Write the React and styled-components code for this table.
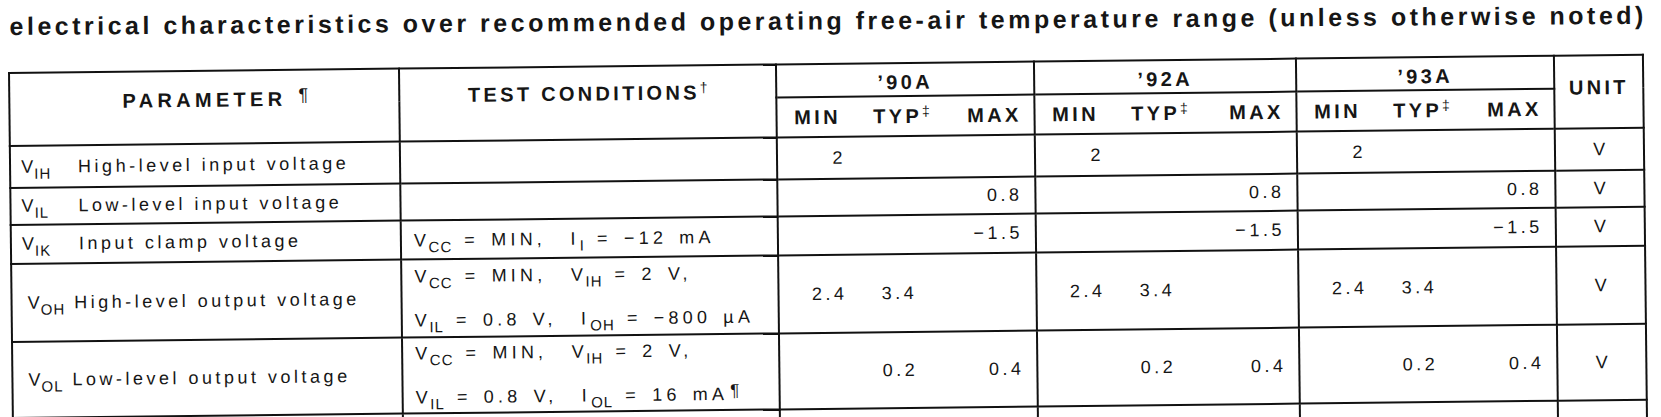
import React from "react";
import styled, { createGlobalStyle } from "styled-components";

const GlobalStyle = createGlobalStyle`
  html, body {
    margin: 0;
    padding: 0;
    background: #ffffff;
  }
  body {
    font-family: "Liberation Sans", Arial, sans-serif;
    color: #161616;
  }
`;

const Sheet = styled.div`
  width: 1661px;
  height: 417px;
  overflow: hidden;
`;

const Page = styled.div`
  padding: 13px 0 0 8px;
  transform: rotate(-0.64deg);
  transform-origin: 8px 72px;
`;

const Title = styled.h1`
  margin: 0 0 33px 2px;
  font-size: 25px;
  line-height: 26px;
  font-weight: 700;
  letter-spacing: 3.5px;
  white-space: nowrap;
  transform: rotate(0.25deg);
  transform-origin: left center;
`;

const Table = styled.table`
  border-collapse: collapse;
  table-layout: fixed;
  width: 1634px;
  border: 2px solid #111;
`;

const Row = styled.tr`
  height: ${({ $h }) => $h}px;
`;

const Head = styled.th`
  border: 2px solid #111;
  padding: ${({ $drop }) => $drop || 0}px 0 ${({ $lift }) => $lift || 0}px;
  font-size: 20px;
  font-weight: 700;
  letter-spacing: ${({ $ls }) => $ls || 3.3}px;
  text-align: center;
  vertical-align: middle;
  white-space: nowrap;
`;

const Cell = styled.td`
  border: 2px solid #111;
  padding: 0;
  font-size: 18px;
  letter-spacing: 3.5px;
  vertical-align: middle;
  white-space: nowrap;
`;

const ParamCell = styled(Cell)`
  padding-left: ${({ $pad }) => $pad}px;
`;

const CondCell = styled(Cell)`
  padding-left: 12px;
  letter-spacing: 4.2px;
  word-spacing: 3px;
`;

const UnitCell = styled(Cell)`
  text-align: center;
  padding-left: 3px;
`;

const CondLine = styled.div`
  line-height: 30px;
  white-space: pre;
  & + & {
    margin-top: 14px;
  }
`;

const Sym = styled.span`
  display: inline-block;
  width: ${({ $w }) => ($w ? `${$w}px` : "auto")};
  margin-right: ${({ $gap }) => $gap || 0}px;
  letter-spacing: ${({ $ls }) => $ls}px;
`;

const Sub = styled.span`
  font-size: 15px;
  vertical-align: -6px;
  line-height: 0;
  letter-spacing: 1px;
`;

const Mark = styled.span`
  font-size: ${({ $size }) => $size || 14}px;
  font-weight: 400;
  vertical-align: ${({ $rise }) => $rise || 7}px;
  line-height: 0;
  letter-spacing: 0;
  margin-left: ${({ $gap }) => $gap || 0}px;
  margin-right: ${({ $hang }) => ($hang ? -$hang : 0)}px;
`;

const Trio = styled.div`
  display: grid;
  grid-template-columns: 80px 80px 1fr;
  align-items: center;
  height: 100%;
`;

const Slot = styled.span`
  text-align: ${({ $align }) => $align};
  padding-right: ${({ $align }) => ($align === "right" ? 12 : 0)}px;
  padding-left: ${({ $shift }) => $shift || 0}px;
`;

const groups = ["’90A", "’92A", "’93A"];

const Vs = ({ s, w, gap, ls = 2.5 }) => (
  <Sym $w={w} $gap={gap} $ls={ls}>
    V<Sub>{s}</Sub>
  </Sym>
);

const rows = [
  {
    h: 42,
    sym: "IH",
    name: "High-level input voltage",
    vals: { min: "2" },
  },
  {
    h: 37,
    sym: "IL",
    name: "Low-level input voltage",
    vals: { max: "0.8" },
  },
  {
    h: 39,
    sym: "IK",
    name: "Input clamp voltage",
    cond: [
      <>
        <Vs s="CC" /> = MIN,{"  "}I<Sub>I</Sub> = −12 mA
      </>,
    ],
    vals: { max: "−1.5" },
  },
  {
    h: 78,
    sym: "OH",
    name: "High-level output voltage",
    wide: true,
    cond: [
      <>
        <Vs s="CC" /> = MIN,{"  "}
        <Vs s="IH" /> = 2 V,
      </>,
      <>
        <Vs s="IL" /> = 0.8 V,{"  "}I<Sub>OH</Sub> = −800 µA
      </>,
    ],
    vals: { min: "2.4", typ: "3.4" },
  },
  {
    h: 76,
    sym: "OL",
    name: "Low-level output voltage",
    wide: true,
    cond: [
      <>
        <Vs s="CC" /> = MIN,{"  "}
        <Vs s="IH" /> = 2 V,
      </>,
      <>
        <Vs s="IL" /> = 0.8 V,{"  "}I<Sub>OL</Sub> = 16 mA
        <Mark $gap={2} $size={17} $rise={4}>
          ¶
        </Mark>
      </>,
    ],
    vals: { typ: "0.2", max: "0.4" },
  },
];

function Values({ vals }) {
  return (
    <Trio>
      <Slot $align="right">{vals.min}</Slot>
      <Slot $align="center">{vals.typ}</Slot>
      <Slot $align="right">{vals.max}</Slot>
    </Trio>
  );
}

export default function App() {
  return (
    <Sheet>
      <GlobalStyle />
      <Page>
        <Title>
          electrical characteristics over recommended operating free-air
          temperature range (unless otherwise noted)
        </Title>
        <Table>
          <colgroup>
            <col style={{ width: 390 }} />
            <col style={{ width: 377 }} />
            <col style={{ width: 258 }} />
            <col style={{ width: 262 }} />
            <col style={{ width: 258 }} />
            <col style={{ width: 89 }} />
          </colgroup>
          <thead>
            <Row $h={33}>
              <Head rowSpan={2} $lift={14} $ls={4.3}>
                PARAMETER
                <Mark $gap={12} $hang={22} $size={18} $rise={5}>
                  ¶
                </Mark>
              </Head>
              <Head rowSpan={2} $lift={18}>
                TEST CONDITIONS<Mark>†</Mark>
              </Head>
              {groups.map((g) => (
                <Head key={g} $drop={6}>
                  {g}
                </Head>
              ))}
              <Head rowSpan={2} $lift={8}>
                UNIT
              </Head>
            </Row>
            <Row $h={40}>
              {groups.map((g) => (
                <Head key={g}>
                  <Trio>
                    <Slot $align="center">MIN</Slot>
                    <Slot $align="center" $shift={8}>
                      TYP<Mark>‡</Mark>
                    </Slot>
                    <Slot $align="right">MAX</Slot>
                  </Trio>
                </Head>
              ))}
            </Row>
          </thead>
          <tbody>
            {rows.map((r) => (
              <Row key={r.sym} $h={r.h}>
                <ParamCell $pad={r.wide ? 15 : 10}>
                  <Vs
                    s={r.sym}
                    w={r.wide ? 0 : 57}
                    gap={r.wide ? 9 : 0}
                    ls={1}
                  />
                  {r.name}
                </ParamCell>
                <CondCell>
                  {(r.cond || []).map((c, i) => (
                    <CondLine key={i}>{c}</CondLine>
                  ))}
                </CondCell>
                {groups.map((g) => (
                  <Cell key={g}>
                    <Values vals={r.vals} />
                  </Cell>
                ))}
                <UnitCell>V</UnitCell>
              </Row>
            ))}
            <Row $h={80}>
              <Cell />
              <Cell />
              <Cell />
              <Cell />
              <Cell />
              <Cell />
            </Row>
          </tbody>
        </Table>
      </Page>
    </Sheet>
  );
}
